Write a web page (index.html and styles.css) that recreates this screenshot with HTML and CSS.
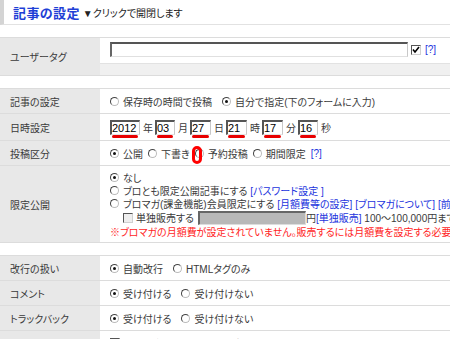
FILE: index.html
```html
<!DOCTYPE html>
<html lang="ja">
<head>
<meta charset="utf-8">
<link rel="stylesheet" href="styles.css">
</head>
<body>
<div class="head"><span class="title">記事の設定</span><span class="toggle">▼クリックで開閉します</span></div>

<div class="tbl">
  <div class="row tagrow">
    <div class="lab">ユーザータグ</div>
    <div class="tagval">
      <div class="tagmain">
        <span class="textbox"></span>
        <span class="cbx on"><svg width="8" height="8" viewBox="0 0 8 8"><polyline points="1,3.5 3,6 7,1" fill="none" stroke="#000" stroke-width="1.6"/></svg></span>
        <span class="lk">[?]</span>
      </div>
      <div class="tagstrip"></div>
    </div>
  </div>
</div>

<div class="tbl">
  <div class="row">
    <div class="lab">記事の設定</div>
    <div class="val"><span class="rd"></span><span class="tx gap">保存時の時間で投稿</span><span class="rd on"></span><span class="tx">自分で指定(下のフォームに入力)</span></div>
  </div>
  <div class="row daterow">
    <div class="lab">日時設定</div>
    <div class="val">
      <span class="box w30">2012</span><span class="u">年</span>
      <span class="box w20">03</span><span class="u">月</span>
      <span class="box">27</span><span class="u">日</span>
      <span class="box">21</span><span class="u">時</span>
      <span class="box">17</span><span class="u">分</span>
      <span class="box w20">16</span><span class="u">秒</span>
    </div>
  </div>
  <div class="row">
    <div class="lab">投稿区分</div>
    <div class="val"><span class="rd on"></span><span class="tx">公開</span><span class="rd"></span><span class="tx">下書き</span><span class="rd mark"></span><span class="tx">予約投稿</span><span class="rd"></span><span class="tx">期間限定</span><span class="lk">[?]</span></div>
  </div>
  <div class="row">
    <div class="lab">限定公開</div>
    <div class="multi">
      <div class="ln"><span class="rd on"></span><span>なし</span></div>
      <div class="ln"><span class="rd"></span><span>ブロとも限定公開記事にする <span class="lk">[パスワード設定 ]</span></span></div>
      <div class="ln"><span class="rd"></span><span>ブロマガ(課金機能)会員限定にする <span class="lk">[月額費等の設定]</span> <span class="lk">[ブロマガについて]</span> <span class="lk">[前書き設定]</span></span></div>
      <div class="ln ind"><span class="cbx"></span><span>単独販売する</span><span class="gbox"></span><span>円<span class="lk">[単独販売]</span> 100～100,000円まで</span></div>
      <div class="ln red">※ブロマガの月額費が設定されていません。販売するには月額費を設定する必要があります。</div>
    </div>
  </div>
</div>

<div class="tbl">
  <div class="row">
    <div class="lab">改行の扱い</div>
    <div class="val"><span class="rd on"></span><span class="tx gap">自動改行</span><span class="rd"></span><span class="tx">HTMLタグのみ</span></div>
  </div>
  <div class="row">
    <div class="lab">コメント</div>
    <div class="val"><span class="rd on"></span><span class="tx gap">受け付ける</span><span class="rd"></span><span class="tx">受け付けない</span></div>
  </div>
  <div class="row">
    <div class="lab">トラックバック</div>
    <div class="val"><span class="rd on"></span><span class="tx gap">受け付ける</span><span class="rd"></span><span class="tx">受け付けない</span></div>
  </div>
  <div class="row">
    <div class="lab">表示設定</div>
    <div class="val"><span class="cbx"></span><span class="tx">RSS (ブログ内) の新着記事一覧に表示しない</span></div>
  </div>
</div>
</body>
</html>
```

FILE: styles.css
```css
html, body {
  margin: 0;
  padding: 0;
}
body {
  width: 450px;
  height: 339px;
  overflow: hidden;
  background: #fff;
  color: #3a3a3a;
  font-family: "Liberation Sans", "Noto Sans CJK JP", sans-serif;
  font-size: 10px;
  font-feature-settings: "palt";
}

.head {
  height: 24px;
  border-left: 4px solid #d4d4d4;
  border-bottom: 1px solid #e2e2e2;
  padding-left: 9px;
  display: flex;
  align-items: center;
  white-space: nowrap;
}
.title {
  font-size: 13px;
  font-weight: bold;
  color: #1f3fd6;
  margin-right: 3px;
  letter-spacing: 0.4px;
}
.toggle {
  font-size: 10px;
  color: #222;
}

.tbl {
  margin-top: 12px;
  border-top: 1px solid #dcdcdc;
}
.row {
  display: grid;
  grid-template-columns: 100px 1fr;
  border-bottom: 1px solid #dcdcdc;
  min-height: 24px;
}
.lab {
  background: #e8e8e8;
  padding-left: 10px;
  display: flex;
  align-items: center;
  white-space: nowrap;
}
.val {
  padding-left: 10px;
  display: flex;
  align-items: center;
  white-space: nowrap;
}

.tagrow {
  min-height: 37px;
}
.tagval {
  display: flex;
  flex-direction: column;
}
.tagmain {
  height: 26px;
  padding: 4px 0 0 10px;
  box-sizing: border-box;
  display: flex;
  align-items: flex-start;
  border-bottom: 1px solid #e2e2e2;
}
.tagstrip {
  flex: 1;
  background: #f0f0f0;
}
.textbox {
  width: 298px;
  height: 15px;
  box-sizing: border-box;
  border-top: 2px solid #555;
  border-left: 2px solid #666;
  border-right: 1px solid #c8c8c8;
  border-bottom: 1px solid #e0e0e0;
  margin-right: 3px;
}
.tagmain .cbx {
  margin-top: 3px;
  margin-right: 4px;
}
.tagmain .lk {
  line-height: 15px;
}

.cbx {
  width: 10px;
  height: 10px;
  box-sizing: border-box;
  border: 1px solid;
  border-color: #555 #d0d0d0 #d0d0d0 #555;
  background: #eee;
  flex: none;
  display: inline-flex;
  align-items: center;
  justify-content: center;
  margin-right: 3px;
}
.cbx.on {
  background: #fff;
}

.rd {
  width: 9px;
  height: 9px;
  box-sizing: border-box;
  border-radius: 50%;
  border: 1px solid;
  border-color: #444 #bbb #bbb #444;
  background: #fff;
  position: relative;
  flex: none;
  margin-right: 4px;
}
.rd.on::after {
  content: "";
  position: absolute;
  left: 2px;
  top: 2px;
  width: 3px;
  height: 3px;
  border-radius: 50%;
  background: #111;
}
.rd.mark::before {
  content: "";
  position: absolute;
  left: -4px;
  top: -4px;
  width: 10px;
  height: 18px;
  box-sizing: border-box;
  border: 3px solid #f00;
  border-radius: 5px;
  z-index: 2;
}
.tx {
  margin-right: 5px;
}
.tx.gap {
  margin-right: 10px;
}
.lk {
  color: #2233dd;
}

.daterow {
  min-height: 26px;
}
.box {
  display: inline-block;
  width: 21px;
  height: 15px;
  box-sizing: border-box;
  border-top: 2px solid #555;
  border-left: 2px solid #555;
  border-right: 1px solid #c8c8c8;
  border-bottom: 1px solid #e4e4e4;
  font-family: "Liberation Sans", sans-serif;
  font-size: 11px;
  line-height: 12px;
  color: #000;
  position: relative;
  flex: none;
}
.box::after {
  content: "";
  position: absolute;
  left: 0;
  right: 1px;
  bottom: -4px;
  height: 3px;
  background: #e80000;
  border-radius: 2px;
}
.box.w30 {
  width: 30px;
}
.box.w20 {
  width: 20px;
}
.u {
  margin: 0 2px 0 3px;
}

.multi {
  padding: 5px 0 4px 10px;
  white-space: nowrap;
}
.ln {
  display: flex;
  align-items: center;
  height: 13px;
}
.ln.ind {
  height: 15px;
  padding-left: 13px;
}
.ln.ind .cbx {
  margin-right: 3px;
}
.gbox {
  width: 108px;
  height: 14px;
  box-sizing: border-box;
  margin-left: 4px;
  background: #b8b8b8;
  border-top: 2px solid #666;
  border-left: 2px solid #666;
  border-right: 1px solid #ddd;
  border-bottom: 1px solid #ddd;
  flex: none;
}
.ln.red {
  color: #ff1e1e;
}
```
